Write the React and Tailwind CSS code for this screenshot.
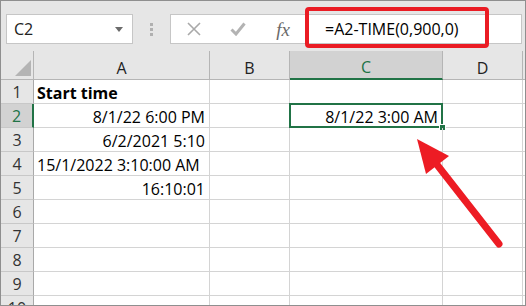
export default function App() {
  const rows = [
    { n: 1, a: 'Start time', bold: true },
    { n: 2, a: '8/1/22 6:00 PM', right: true, c: '8/1/22 3:00 AM' },
    { n: 3, a: '6/2/2021 5:10', right: true },
    { n: 4, a: '15/1/2022 3:10:00 AM' },
    { n: 5, a: '16:10:01', right: true },
    { n: 6 },
    { n: 7 },
    { n: 8 },
    { n: 9 },
    { n: 10 },
  ];
  const font = { fontFamily: '"Open Sans", "Noto Sans", sans-serif' };
  return (
    <div
      className="relative w-[526px] h-[306px] overflow-hidden bg-white border border-[#8f8f8f] text-black"
      style={font}
    >
      {/* toolbar */}
      <div className="h-[50px] bg-[#e6e6e6] flex items-start pt-[13px] pl-[5px]">
        <div className="w-[127px] h-[30px] bg-white border border-[#c6c6c6] flex items-center justify-between pl-[7px] pr-[9px]">
          <span className="text-[16px] leading-none text-[#222]">C2</span>
          <svg width="8" height="5" viewBox="0 0 8 5">
            <path d="M0 0 H8 L4 5 Z" fill="#6b6b6b" />
          </svg>
        </div>
        <div className="w-[37px] h-[30px] flex flex-col items-center justify-center gap-[2px]">
          <span className="w-[3px] h-[3px] bg-[#b0b0b0]" />
          <span className="w-[3px] h-[3px] bg-[#b0b0b0]" />
          <span className="w-[3px] h-[3px] bg-[#b0b0b0]" />
        </div>
        <div className="w-[352px] h-[30px] bg-white border border-[#c6c6c6] flex items-center">
          <div className="w-[46px] flex justify-center">
            <svg width="14" height="14" viewBox="0 0 14 14">
              <path d="M1 1 L13 13 M13 1 L1 13" stroke="#a9a9a9" strokeWidth="1.6" />
            </svg>
          </div>
          <div className="w-[42px] flex justify-center">
            <svg width="16" height="14" viewBox="0 0 16 14">
              <path d="M1.5 7.5 L6 12 L14.5 1.5" stroke="#b3b3b3" strokeWidth="3" fill="none" />
            </svg>
          </div>
          <div className="w-[48px] flex justify-center">
            <span
              className="italic text-[19px] leading-none text-[#6a6a6a]"
              style={{ fontFamily: '"Liberation Serif", serif' }}
            >
              fx
            </span>
          </div>
          <span className="ml-[18px] text-[16px] leading-none text-black">=A2-TIME(0,900,0)</span>
        </div>
      </div>

      {/* grid */}
      <div className="grid grid-cols-[33px_176px_80px_153px_80px_1fr]">
        {/* header row */}
        <div className="h-[29px] bg-[#e6e6e6] border-r border-b border-[#b5b5b5] relative">
          <svg className="absolute right-[2px] bottom-[3px]" width="16" height="16" viewBox="0 0 16 16">
            <path d="M16 0 L16 16 L0 16 Z" fill="#b4b4b4" />
          </svg>
        </div>
        <div className="h-[29px] bg-[#e6e6e6] border-r border-b border-[#b5b5b5] flex items-end justify-center text-[16px] leading-[22px] text-[#222]">A</div>
        <div className="h-[29px] bg-[#e6e6e6] border-r border-b border-[#b5b5b5] flex items-end justify-center text-[16px] leading-[22px] text-[#222]">B</div>
        <div className="h-[29px] bg-[#d2d2d2] border-r border-[#b5b5b5] border-b-2 border-b-[#217346] flex items-end justify-center text-[16px] leading-[21px] text-[#217346]">C</div>
        <div className="h-[29px] bg-[#e6e6e6] border-r border-b border-[#b5b5b5] flex items-end justify-center text-[16px] leading-[22px] text-[#222]">D</div>
        <div className="h-[29px] bg-[#e6e6e6] border-b border-[#b5b5b5]" />

        {rows.map((r) => (
          <Row key={r.n} r={r} />
        ))}
      </div>

      {/* red highlight around formula */}
      <div className="absolute left-[304px] top-[6px] w-[184px] h-[41px] border-[4px] border-[#ea1c24] rounded-[4px]" />

      {/* arrow */}
      <svg className="absolute left-0 top-0" width="526" height="306" viewBox="0 0 526 306">
        <line x1="498" y1="243" x2="430" y2="156" stroke="#ed1c24" strokeWidth="7" strokeLinecap="round" />
        <polygon points="416,138 448,155 425,173" fill="#ed1c24" />
      </svg>
    </div>
  );
}

function Row({ r }) {
  const active = r.n === 2;
  return (
    <>
      <div
        className={
          'h-[24px] flex items-end justify-center text-[16px] leading-[21px] border-b border-[#c8c8c8] ' +
          (active
            ? 'bg-[#d2d2d2] border-r-2 border-r-[#217346] text-[#217346]'
            : 'bg-[#e6e6e6] border-r border-r-[#a9a9a9] text-[#333]')
        }
      >
        {r.n}
      </div>
      <div
        className={
          'h-[24px] border-r border-b border-[#d4d4d4] flex items-end text-[16px] leading-[20px] whitespace-nowrap ' +
          (r.right ? 'justify-end pr-[4px] ' : 'justify-start pl-[3px] ') +
          (r.bold ? 'font-bold' : '')
        }
      >
        {r.a}
      </div>
      <div className="h-[24px] border-r border-b border-[#d4d4d4]" />
      <div className="h-[24px] border-r border-b border-[#d4d4d4] relative flex items-end justify-end pr-[4px] text-[16px] leading-[20px] whitespace-nowrap">
        {r.c}
        {active && (
          <>
            <div className="absolute left-[-1px] top-[-1px] right-[-1px] bottom-[-1px] border-2 border-[#217346]" />
            <div className="absolute right-[-4px] bottom-[-4px] w-[7px] h-[7px] bg-[#217346] border border-white" />
          </>
        )}
      </div>
      <div className="h-[24px] border-r border-b border-[#d4d4d4]" />
      <div className="h-[24px] border-b border-[#d4d4d4]" />
    </>
  );
}
